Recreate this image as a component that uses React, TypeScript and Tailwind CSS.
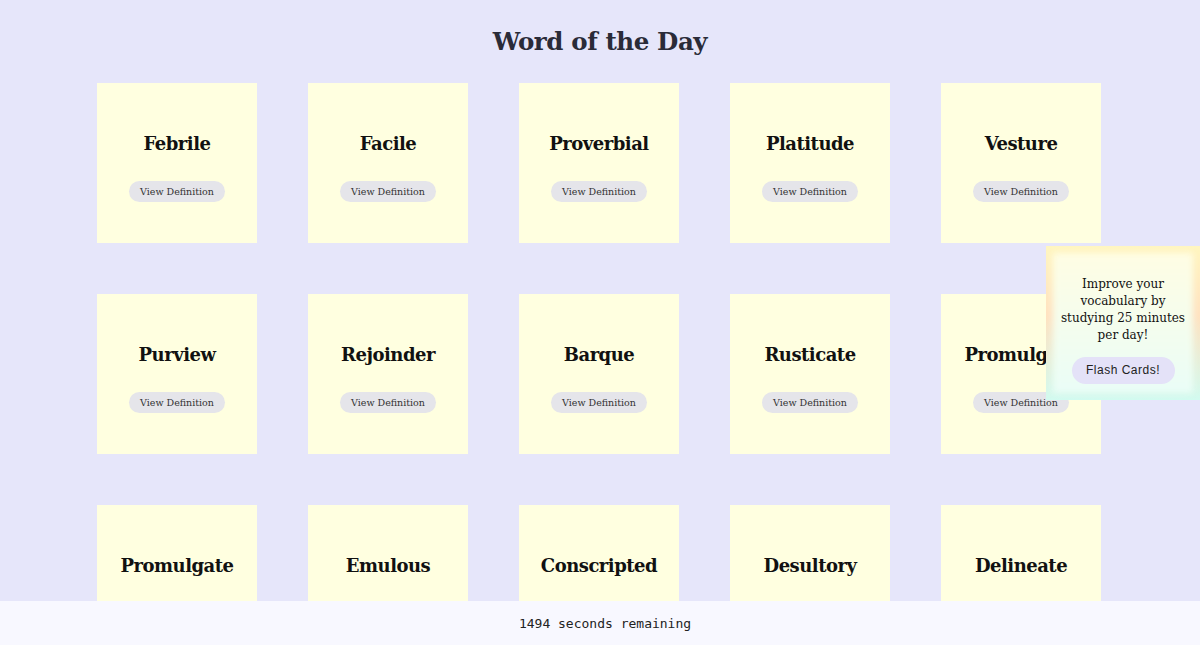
const words = [
  "Febrile",
  "Facile",
  "Proverbial",
  "Platitude",
  "Vesture",
  "Purview",
  "Rejoinder",
  "Barque",
  "Rusticate",
  "Promulgate",
  "Promulgate",
  "Emulous",
  "Conscripted",
  "Desultory",
  "Delineate",
];

const slab = "font-['DejaVu_Serif','Liberation_Serif',serif]";

function WordCard({ word }: { word: string }) {
  return (
    <div className="w-[160px] h-[160px] bg-[#ffffe0] flex flex-col items-center justify-center gap-[25px] pt-[8px]">
      <h2 className={`${slab} text-[18px] font-bold text-[#111] leading-[24px] tracking-[-0.5px]`}>{word}</h2>
      <button className={`${slab} h-[21px] px-[11px] rounded-full bg-[#e5e5ea] text-[9.5px] text-[#333] leading-none`}>
        View Definition
      </button>
    </div>
  );
}

export default function App() {
  return (
    <div className="min-h-[645px] bg-[#e6e6fa] pb-[60px]">
      <h1 className={`${slab} text-center text-[24.5px] font-bold text-[#2a2b38] pt-[22px] pb-[21px] leading-[40px] tracking-[-0.4px]`}>
        Word of the Day
      </h1>
      <div className="grid grid-cols-[repeat(5,160px)] gap-[51px] justify-center pr-[2px]">
        {words.map((w, i) => (
          <WordCard key={i} word={w} />
        ))}
      </div>

      {/* study reminder */}
      <div className="fixed left-[1046px] top-[246px] w-[154px] h-[154px] bg-[linear-gradient(180deg,#fff6c0_0%,#ffe2c0_45%,#d2fbf0_100%)] overflow-hidden">
        <div className="absolute inset-[7px] bg-[linear-gradient(180deg,#fffde4,#eafdf7)] blur-[3px]" />
        <div className="relative h-full flex flex-col items-center justify-center gap-[13px] pt-[13px]">
          <p className={`${slab} text-center text-[12px] leading-[17px] text-[#111] px-[8px]`}>
            Improve your
            <br />
            vocabulary by
            <br />
            studying 25 minutes
            <br />
            per day!
          </p>
          <button className="h-[27px] w-[103px] rounded-full bg-[#e4e2f8] text-[12px] tracking-[0.5px] text-[#222] font-['Liberation_Sans',Arial,sans-serif]">
            Flash Cards!
          </button>
        </div>
      </div>

      {/* timer */}
      <div className="fixed left-0 right-0 bottom-0 h-[44px] bg-[#f8f8ff] flex items-center justify-center pl-[10px]">
        <span className="font-['DejaVu_Sans_Mono',monospace] text-[13px] text-[#222] pt-[2px]">1494 seconds remaining</span>
      </div>
    </div>
  );
}
